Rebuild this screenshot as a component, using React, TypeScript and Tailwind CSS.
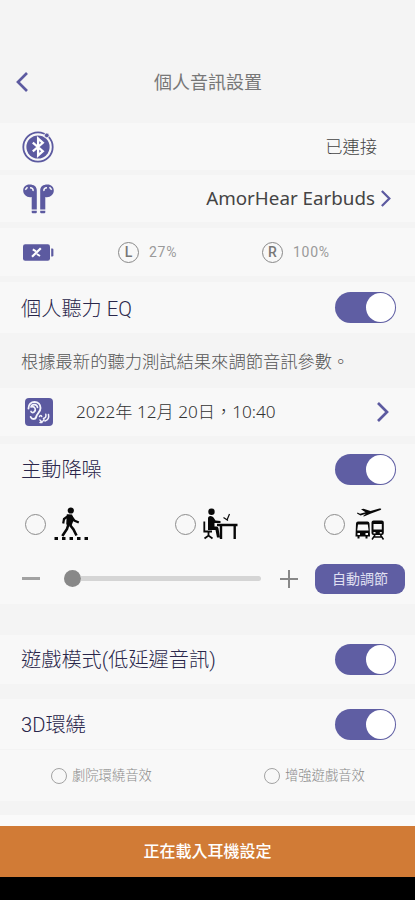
import type { ReactNode } from "react";

const PURPLE = "#5c5aa0";

function Toggle() {
  return (
    <button className="flex h-[31px] w-[61px] shrink-0 items-center justify-end rounded-full bg-[#5f5ea3] p-px" aria-pressed="true">
      <span className="h-[29px] w-[29px] rounded-full bg-white" />
    </button>
  );
}

function Radio({ small = false }: { small?: boolean }) {
  return (
    <span
      className={
        small
          ? "h-4 w-4 shrink-0 rounded-full border-[1.5px] border-[#a3a3a3]"
          : "h-[21px] w-[21px] shrink-0 rounded-full border border-[#8c8c8c]"
      }
    />
  );
}

function Chevron({ className, left = false }: { className: string; left?: boolean }) {
  return (
    <svg className={className} viewBox="0 0 12 20" fill="none" stroke={PURPLE} strokeWidth="2.7">
      <path d={left ? "M11 1 2 10l9 9" : "m1 1 9 9-9 9"} />
    </svg>
  );
}

function BluetoothIcon() {
  return (
    <svg className="h-8 w-8" viewBox="0 0 32 32" fill="none">
      <circle cx="16" cy="16" r="14.7" stroke={PURPLE} strokeWidth="1.8" />
      <circle cx="16" cy="16" r="11.6" fill={PURPLE} />
      <circle cx="24.8" cy="4.4" r="2.4" fill={PURPLE} stroke="#f8f8f8" strokeWidth="0.8" />
      <path d="m10.8 11.6 10 8.6-4.7 4.3V7.5l4.7 4.3-10 8.6" stroke="#fff" strokeWidth="2.3" />
    </svg>
  );
}

function EarbudsIcon() {
  return (
    <svg className="h-[30px] w-[31px]" viewBox="0 0 31 30">
      <g fill={PURPLE}>
        <path d="M6.5.5c4.500 0 7.300 2 7.300 6V25.500H8.700V13C4.500 14 .2 11 .2 6.500.2 3 2.800.5 6.500.5Z" />
        <path d="M24.500.5c-4.500 0-7.300 2-7.300 6V25.500h5.100V13c4.200 1 8.500-2 8.500-6.500 0-3.500-2.600-6-6.300-6Z" />
        <path d="M8.700 26.700h5.100v1.500q0 1-1 1H9.700q-1 0-1-1ZM17.200 26.700h5.100v1.500q0 1-1 1h-3.100q-1 0-1-1Z" />
      </g>
      <g fill="none" stroke="#f8f8f8" strokeWidth="1.500">
        <path d="M2.300 5.800 4.500 3.300M7 3.800c2.500 0 3.400 1.300 3 3.200M28.700 5.800 26.500 3.300M24 3.800c-2.500 0-3.400 1.300-3 3.200" />
      </g>
    </svg>
  );
}

function BatteryIcon() {
  return (
    <svg className="h-[17px] w-[31px]" viewBox="0 0 31 17">
      <rect y="0.300" width="27" height="16.400" rx="2.200" fill={PURPLE} />
      <path d="M28.200 4.500h1q1.200 0 1.200 1.200v5.600q0 1.200-1.200 1.200h-1Z" fill={PURPLE} />
      <path d="m9 12.800 8.800-8.600" stroke="#fff" strokeWidth="2.200" />
      <path d="m9.800 5.400 3.200 2M13.800 10l3.200 2" stroke="#fff" strokeWidth="2" />
    </svg>
  );
}

function HearingIcon() {
  return (
    <svg className="h-7 w-7" viewBox="0 0 28 28" fill="none">
      <rect width="28" height="28" rx="4" fill={PURPLE} />
      <g stroke="#f4f4fc" strokeLinecap="round">
        <path strokeWidth="1.900" d="M3.500 10.500c0-4 2.700-6.500 6-6.500 3.600 0 6 2.500 6 6 0 4.500-3.700 5.500-4.200 8.500-.5 3-4.500 3.300-5.600.5" />
        <path strokeWidth="1.700" d="M6 9c.8-3.300 6-3.200 6.500.4M7 8.700c3 0 4.600 3 2 5.300-1.300 1-2.500.6-3-.5" />
        <path strokeWidth="1.500" d="M14.500 18.500c.5-1.500 2-1.500 2.200 0M18.500 20.500c2-.6 2.800-2 2.300-4.200M20 23c2.800-1 4.200-3.500 3.500-6.500M15 22c1 2 3 2 4-.3M15 24.500h2" />
      </g>
    </svg>
  );
}

function WalkIcon() {
  return (
    <svg className="h-[34px] w-[34px]" viewBox="0 0 34 34" fill="none" stroke="#080808">
      <circle cx="16.800" cy="3.500" r="3.100" fill="#080808" stroke="none" />
      <path d="m13.500 8 4 .3 1.500 4.500-2 5-4-.8Z" fill="#080808" strokeWidth="1.500" />
      <path d="M13.500 9.500 10 12l-.8 4.500M17.500 9.500l2.800 4 4.500 2" strokeWidth="2.200" />
      <path d="m14.500 17-1.500 5-4.700 7M16 18l3.500 4.500 3 6" strokeWidth="2.600" />
      <path d="M.5 31.500H34" strokeWidth="3" strokeDasharray="3.500 4" />
    </svg>
  );
}

function DeskIcon() {
  return (
    <svg className="h-8 w-[35px]" viewBox="0 0 35 32" fill="none" stroke="#080808">
      <circle cx="8.500" cy="3.800" r="3.200" fill="#080808" stroke="none" />
      <path d="M5 10.500q0-2.500 2.500-2.500 2 0 3 1.500l2 3 5 .5v2h-6v3.500h2q1.700 0 2 2l1.500 9h-3l-1.500-7.500H5Z" fill="#080808" stroke="none" />
      <path d="M1.300 13.500v10H9M5.500 23.500v4M1.500 30.500l4-3 4 3" strokeWidth="1.800" />
      <path d="M14 17h20.500M18 17v14M31.700 17v14" strokeWidth="2.400" />
      <path d="m24 12 2.500-6M20.500 9.500l4.500 3" strokeWidth="1.200" />
    </svg>
  );
}

function TransitIcon() {
  return (
    <svg className="h-[32px] w-[30px]" viewBox="0 0 30 32" fill="none">
      <path d="M2.500 4.500 5 5.800l5.500-1.500L6 1.300 8.500.7l7 2.200 8-2.200c2.500-.6 3.500.3 2 1.300l-9.500 3.500-6.500 2.800H7.800L11 5.800 5.500 7.500 2 5.500Z" fill="#080808" />
      <path fillRule="evenodd" d="M3 13.500h9.500q1.800 0 2 2l.5 13h-2.500v2h-2v-2h-6v2h-2v-2H.500l.5-13q.2-2 2-2Zm0 3-.8 6h11.400l-.8-6ZM2.500 25v2H5v-2Zm8 0v2H13v-2Z" fill="#080808" />
      <path fillRule="evenodd" d="M18.500 12.500h8.300q2 0 2 2V25q0 2-2 2h-8.300q-2 0-2-2V14.500q0-2 2-2Zm0 3.500v5.500h8.300V16Zm0 8v1.500h2V24Zm6.300 0v1.500h2V24Z" fill="#080808" />
      <path d="m20 27-3 4.500m8.500-4.500 3 4.500M19 29h8" stroke="#080808" strokeWidth="1.500" />
    </svg>
  );
}

function Heading({ children }: { children: ReactNode }) {
  return <h2 className="text-[20.200px] leading-none font-light whitespace-nowrap text-[#29264a]">{children}</h2>;
}

function BatteryLevel({ side, level }: { side: string; level: string }) {
  return (
    <div className="flex items-center gap-2.5">
      <span className="flex h-[21px] w-[21px] items-center justify-center rounded-full border border-[#888888] text-[14px] font-medium text-[#777777]">
        {side}
      </span>
      <span className="text-[14px] tracking-[0.700px] text-[#9a9a9a]">{level}</span>
    </div>
  );
}

export default function App() {
  return (
    <main className="flex h-[900px] w-[415px] flex-col overflow-hidden bg-[#f4f4f4] font-['Roboto','Noto_Sans_CJK_TC',sans-serif]">
      <header className="flex h-[123px] shrink-0 items-center pt-10 pl-4">
        <Chevron left className="h-5 w-3" />
        <h1 className="ml-[126px] pt-[3px] text-[18px] leading-none text-[#777777]">個人音訊設置</h1>
      </header>

      <section className="flex h-[47px] shrink-0 items-center justify-between bg-[#f8f8f8] pr-[38px] pl-[22px]">
        <BluetoothIcon />
        <span className="pt-[3px] text-[17.300px] leading-none font-light text-[#444444]">已連接</span>
      </section>

      <section className="mt-[5px] flex h-[47px] shrink-0 items-center bg-[#f8f8f8] pr-6 pl-[23px]">
        <EarbudsIcon />
        <span className="ml-auto font-['Noto_Sans'] text-[18.800px] leading-none text-[#444444]">AmorHear Earbuds</span>
        <Chevron className="ml-1.5 h-[17px] w-2.5" />
      </section>

      {/* Battery levels per side */}
      <section className="mt-[6px] flex h-[48px] shrink-0 items-center bg-[#f8f8f8] pl-[23px]">
        <BatteryIcon />
        <div className="ml-16 w-[144px]">
          <BatteryLevel side="L" level="27%" />
        </div>
        <BatteryLevel side="R" level="100%" />
      </section>

      <section className="mt-[6px] flex h-[51px] shrink-0 items-center justify-between bg-[#f8f8f8] pr-[19px] pl-[21px]">
        <div className="pt-[3px]">
          <Heading>個人聽力 EQ</Heading>
        </div>
        <Toggle />
      </section>
      <p className="flex h-[55px] shrink-0 items-center pt-1 pl-[21px] text-[17.300px] font-light text-[#555555]">
        根據最新的聽力測試結果來調節音訊參數。
      </p>
      <section className="flex h-[48px] shrink-0 items-center bg-[#f8f8f8] pr-[26px] pl-[25px]">
        <HearingIcon />
        <span className="ml-[23px] font-['Noto_Sans','Noto_Sans_CJK_TC',sans-serif] text-[17.200px] leading-none font-light text-[#333333]">
          2022年 12月 20日，10:40
        </span>
        <Chevron className="ml-auto h-5 w-3" />
      </section>

      {/* Noise cancelling */}
      <section className="mt-[8px] h-[160px] shrink-0 bg-[#f8f8f8]">
        <div className="flex h-[50px] items-center justify-between pr-[19px] pl-[21px]">
          <div className="pt-[2px]">
            <Heading>主動降噪</Heading>
          </div>
          <Toggle />
        </div>
        <div className="flex h-[60px] items-center pl-[25px]">
          <div className="flex w-[150px] items-center gap-2">
            <Radio />
            <WalkIcon />
          </div>
          <div className="flex w-[149px] items-center gap-[7px]">
            <Radio />
            <DeskIcon />
          </div>
          <div className="flex items-center gap-[10px]">
            <Radio />
            <TransitIcon />
          </div>
        </div>
        <div className="flex h-[49px] items-center pr-2.5 pl-[22px]">
          <span className="h-[3px] w-[18px] bg-[#a2a2a2]" />
          <span className="ml-6 h-[17px] w-[17px] rounded-full bg-[#888888]" />
          <span className="h-[5px] w-[180px] rounded-r-full bg-[#d5d5d5]" />
          <svg className="ml-[19px] h-[18px] w-[18px]" viewBox="0 0 18 18" stroke="#888888" strokeWidth="2">
            <path d="M0 9h18M9 0v18" />
          </svg>
          <button className="ml-auto h-[30px] w-[90px] rounded-[9px] bg-[#5f5ea3] text-[14px] leading-none text-[#e0e0f2]">自動調節</button>
        </div>
      </section>

      <section className="mt-[31px] flex h-[49px] shrink-0 items-center justify-between bg-[#f8f8f8] pr-[19px] pl-[21px]">
        <div className="pt-[2px]">
          <Heading>遊戲模式(低延遲音訊)</Heading>
        </div>
        <Toggle />
      </section>
      <section className="mt-[15px] flex h-[51px] shrink-0 items-center justify-between border-b border-[#f3f3f3] bg-[#f8f8f8] pr-[19px] pl-[21px]">
        <div className="pt-[2px]">
          <Heading>3D環繞</Heading>
        </div>
        <Toggle />
      </section>
      <div className="flex h-[51px] shrink-0 items-center bg-[#f8f8f8] pl-[51px] text-[13.300px] font-light text-[#898989]">
        <div className="flex w-[213px] items-center gap-[5px] pt-px">
          <Radio small />
          劇院環繞音效
        </div>
        <div className="flex items-center gap-[5px] pt-px">
          <Radio small />
          增強遊戲音效
        </div>
      </div>

      <div className="mt-auto h-[11px] shrink-0 bg-[#fafafa]" />
      <footer className="flex h-[51px] shrink-0 items-center justify-center bg-[#d17b36] pt-px text-[16px] font-medium text-white">
        正在載入耳機設定
      </footer>
      <div className="h-[23px] shrink-0 bg-black" />
    </main>
  );
}
